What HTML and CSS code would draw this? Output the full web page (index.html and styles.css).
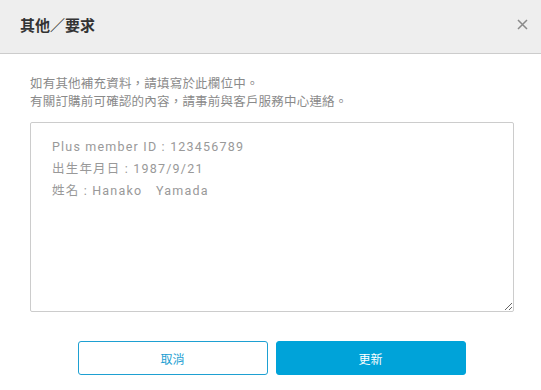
FILE: index.html
```html
<!DOCTYPE html>
<html lang="zh-Hant">
<head>
<meta charset="utf-8">
<link rel="stylesheet" href="styles.css">
</head>
<body>
<div class="dialog">
  <div class="header">
    <h1 class="title">其他／要求</h1>
    <span class="close">
      <svg width="11" height="11" viewBox="0 0 11 11"><path d="M1 1L10 10M10 1L1 10" stroke="#8a8a8a" stroke-width="1.5" fill="none"/></svg>
    </span>
  </div>
  <div class="body">
    <p class="desc">如有其他補充資料，請填寫於此欄位中。<br>有關訂購前可確認的內容，請事前與客戶服務中心連絡。</p>
    <textarea class="field">Plus member ID : 123456789
出生年月日 : 1987/9/21
姓名 : Hanako　Yamada</textarea>
    <div class="actions">
      <button class="btn btn-cancel">取消</button>
      <button class="btn btn-update">更新</button>
    </div>
  </div>
</div>
</body>
</html>
```

FILE: styles.css
```css
html, body {
  margin: 0;
  padding: 0;
  background: #fff;
  font-family: "Noto Sans CJK TC", "Noto Sans", sans-serif;
}
.dialog {
  width: 541px;
}
.header {
  height: 53px;
  background: #eeeeee;
  border-bottom: 1px solid #cccccc;
  display: flex;
  align-items: center;
  justify-content: space-between;
  padding: 0 12px 0 20px;
  box-sizing: content-box;
}
.title {
  margin: 0;
  font-size: 15px;
  font-weight: 700;
  color: #333333;
  line-height: 20px;
  padding-bottom: 4px;
}
.close {
  display: flex;
  width: 14px;
  height: 14px;
  align-items: center;
  justify-content: center;
  padding-bottom: 4px;
}
.body {
  padding: 20px 27px 0 30px;
}
.desc {
  margin: 0;
  font-size: 12.5px;
  letter-spacing: 0.2px;
  line-height: 18px;
  color: #8a8a8a;
}
.field {
  display: block;
  margin-top: 12px;
  width: 484px;
  height: 190px;
  box-sizing: border-box;
  border: 1px solid #cccccc;
  border-radius: 2px;
  padding: 13px 21px;
  font-family: Roboto, "Noto Sans CJK TC", sans-serif;
  font-size: 12.5px;
  line-height: 22px;
  letter-spacing: 1.2px;
  color: #999999;
  resize: vertical;
  outline: none;
}
.actions {
  display: flex;
  justify-content: center;
  gap: 8px;
  margin-top: 29px;
  margin-left: -28px;
  margin-right: -27px;
}
.btn {
  width: 190px;
  height: 34px;
  border-radius: 3px;
  font-family: "Noto Sans CJK TC", sans-serif;
  font-size: 12px;
  cursor: pointer;
}
.btn-cancel {
  background: #fff;
  border: 1px solid #1ea0d2;
  color: #1ea0d2;
}
.btn-update {
  background: #00a3d9;
  border: 1px solid #00a3d9;
  color: #fff;
}
```
